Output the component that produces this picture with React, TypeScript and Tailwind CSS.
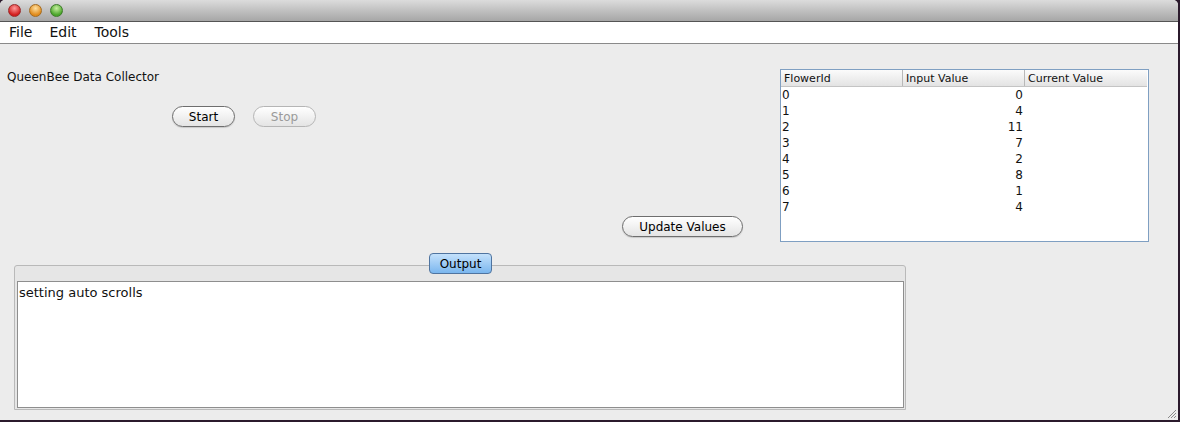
import React from 'react';

const rows = [
  ['0', '0'],
  ['1', '4'],
  ['2', '11'],
  ['3', '7'],
  ['4', '2'],
  ['5', '8'],
  ['6', '1'],
  ['7', '4'],
];

const font = { fontFamily: '"DejaVu Sans", "Liberation Sans", sans-serif' };

const Light: React.FC<{ from: string; to: string; border: string }> = ({ from, to, border }) => (
  <div
    className="w-[13px] h-[13px] rounded-full border"
    style={{ background: `radial-gradient(circle at 50% 30%, ${from}, ${to} 70%)`, borderColor: border }}
  />
);

const PillButton: React.FC<{ label: string; disabled?: boolean; className?: string }> = ({ label, disabled, className }) => (
  <button
    className={
      'h-[21px] rounded-full border bg-gradient-to-b from-white to-[#e4e4e4] text-[12px] leading-none ' +
      (disabled ? 'border-[#b5b5b5] text-[#9a9a9a]' : 'border-[#6e6e6e] text-black shadow-[0_1px_1px_rgba(0,0,0,0.15)]') +
      ' ' +
      (className ?? '')
    }
  >
    {label}
  </button>
);

const App: React.FC = () => {
  return (
    <div className="w-[1180px] h-[422px] bg-[#2b1a2c] overflow-hidden" style={font}>
      <div className="w-[1178px] h-[420px] bg-[#ececec] rounded-t-[5px] overflow-hidden flex flex-col relative">
        {/* title bar */}
        <div className="h-[22px] bg-gradient-to-b from-[#dcdcdc] to-[#a6a6a6] border-b border-[#555] flex items-center gap-[8px] pl-[8px]">
          <Light from="#ff9a9a" to="#d21d1d" border="#9a2a2a" />
          <Light from="#ffe0a0" to="#e08a1a" border="#a36a20" />
          <Light from="#c8f0a0" to="#4aa52a" border="#3d7a2a" />
        </div>

        {/* menu bar */}
        <div className="h-[22px] bg-white border-b border-[#8a8a8a] flex items-center text-[14px] text-[#111]">
          <span className="ml-[9px]">File</span>
          <span className="ml-[17px]">Edit</span>
          <span className="ml-[18px]">Tools</span>
        </div>

        {/* content */}
        <div className="flex-1 flex flex-col">
          <div className="flex">
            <div className="flex-1 flex flex-col">
              <div className="ml-[7px] mt-[25px] text-[12px] text-[#111] leading-[16px]">QueenBee Data Collector</div>
              <div className="flex gap-[18px] ml-[172px] mt-[21px]">
                <PillButton label="Start" className="w-[63px]" />
                <PillButton label="Stop" disabled className="w-[63px]" />
              </div>
              <div className="flex justify-end mr-[37px] mt-[89px]">
                <PillButton label="Update Values" className="w-[121px]" />
              </div>
            </div>

            <div className="w-[369px] h-[173px] mt-[25px] mr-[29px] border border-[#7f9fc2] bg-white text-[11px] text-[#111]">
              <div className="flex h-[17px] border-b border-[#c4c4c4] bg-gradient-to-b from-[#fbfbfb] to-[#e3e3e3] mr-[1px]">
                <div className="w-[122px] border-r border-[#b8b8b8] pl-[3px] leading-[17px]">FlowerId</div>
                <div className="w-[122px] border-r border-[#b8b8b8] pl-[3px] leading-[17px]">Input Value</div>
                <div className="flex-1 pl-[3px] leading-[17px]">Current Value</div>
              </div>
              {rows.map(([id, v]) => (
                <div key={id} className="flex h-[16px] leading-[16px] text-[12px]">
                  <div className="w-[122px] pl-[1px]">{id}</div>
                  <div className="w-[122px] text-right pr-[2px]">{v}</div>
                  <div className="flex-1" />
                </div>
              ))}
            </div>
          </div>

          {/* output panel */}
          <div className="relative ml-[14px] mt-[23px] w-[892px] h-[145px] border border-[#b9b9b9] rounded-t-[3px] bg-[#e6e6e6] flex flex-col">
            <div className="absolute left-[414px] top-[-13px] w-[63px] h-[21px] rounded-[4px] border border-[#4f74a0] bg-gradient-to-b from-[#c4e1fb] to-[#7ab6ee] text-[12px] text-black flex items-center justify-center">
              Output
            </div>
            <div className="mt-[15px] ml-[2px] mr-[1px] h-[127px] bg-white border border-[#8e8e8e] text-[13px] text-[#111] px-[1px] pt-[3px] leading-[16px]">
              setting auto scrolls
            </div>
          </div>
        </div>

        {/* resize grip */}
        <svg className="absolute right-[1px] bottom-[1px]" width="12" height="12" viewBox="0 0 12 12">
          <path d="M11 3 L3 11 M11 6 L6 11 M11 9 L9 11" stroke="#8a8a8a" strokeWidth="1" />
        </svg>
      </div>
    </div>
  );
};

export default App;
